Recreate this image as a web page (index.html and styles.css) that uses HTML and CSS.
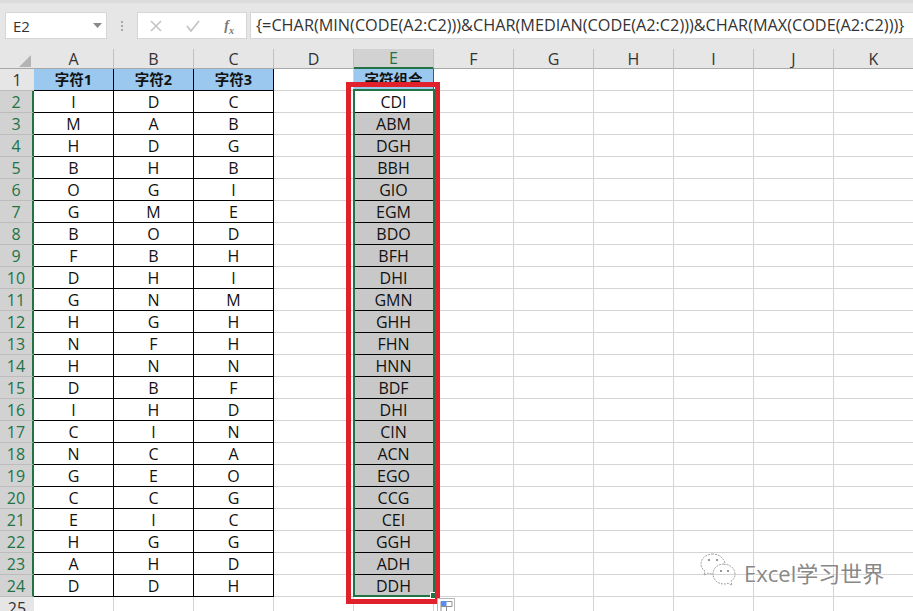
FILE: index.html
```html
<!DOCTYPE html>
<html lang="zh">
<head>
<meta charset="utf-8">
<title>Excel</title>
<link rel="stylesheet" href="styles.css">
</head>
<body>
<div class="app">
  <header class="fbar">
    <div class="namebox"><span>E2</span><svg class="caret" width="9" height="5" viewBox="0 0 9 5"><path d="M0 0h9L4.500 5z" fill="#8a8a8a"/></svg></div>
    <div class="grip"><i></i><i></i><i></i></div>
    <div class="btns">
      <svg width="12" height="12" viewBox="0 0 12 12"><path d="M1 1l10 10M11 1L1 11" stroke="#c4c4c4" stroke-width="1.600" fill="none"/></svg>
      <svg width="14" height="12" viewBox="0 0 14 12"><path d="M1 6l4 5 8-10" stroke="#c4c4c4" stroke-width="1.800" fill="none"/></svg>
      <span class="fx">f<sub>x</sub></span>
    </div>
    <div class="formula">{=CHAR(MIN(CODE(A2:C2)))&amp;CHAR(MEDIAN(CODE(A2:C2)))&amp;CHAR(MAX(CODE(A2:C2)))}</div>
  </header>
  <main class="sheet">
    <table class="grid">
      <thead>
        <tr><th class="corner"><svg width="12" height="12" viewBox="0 0 12 12"><path d="M12 0v12H0z" fill="#b4b4b4"/></svg></th><th>A</th><th>B</th><th>C</th><th>D</th><th class="on">E</th><th>F</th><th>G</th><th>H</th><th>I</th><th>J</th><th>K</th></tr>
      </thead>
      <tbody>
        <tr><th>1</th><td class="k t">字符1</td><td class="k t">字符2</td><td class="k t">字符3</td><td></td><td class="t e1">字符组合</td><td></td><td></td><td></td><td></td><td></td><td></td></tr>
        <tr><th class="on">2</th><td class="k">I</td><td class="k">D</td><td class="k">C</td><td></td><td class="w">CDI</td><td></td><td></td><td></td><td></td><td></td><td></td></tr>
        <tr><th class="on">3</th><td class="k">M</td><td class="k">A</td><td class="k">B</td><td></td><td class="s">ABM</td><td></td><td></td><td></td><td></td><td></td><td></td></tr>
        <tr><th class="on">4</th><td class="k">H</td><td class="k">D</td><td class="k">G</td><td></td><td class="s">DGH</td><td></td><td></td><td></td><td></td><td></td><td></td></tr>
        <tr><th class="on">5</th><td class="k">B</td><td class="k">H</td><td class="k">B</td><td></td><td class="s">BBH</td><td></td><td></td><td></td><td></td><td></td><td></td></tr>
        <tr><th class="on">6</th><td class="k">O</td><td class="k">G</td><td class="k">I</td><td></td><td class="s">GIO</td><td></td><td></td><td></td><td></td><td></td><td></td></tr>
        <tr><th class="on">7</th><td class="k">G</td><td class="k">M</td><td class="k">E</td><td></td><td class="s">EGM</td><td></td><td></td><td></td><td></td><td></td><td></td></tr>
        <tr><th class="on">8</th><td class="k">B</td><td class="k">O</td><td class="k">D</td><td></td><td class="s">BDO</td><td></td><td></td><td></td><td></td><td></td><td></td></tr>
        <tr><th class="on">9</th><td class="k">F</td><td class="k">B</td><td class="k">H</td><td></td><td class="s">BFH</td><td></td><td></td><td></td><td></td><td></td><td></td></tr>
        <tr><th class="on">10</th><td class="k">D</td><td class="k">H</td><td class="k">I</td><td></td><td class="s">DHI</td><td></td><td></td><td></td><td></td><td></td><td></td></tr>
        <tr><th class="on">11</th><td class="k">G</td><td class="k">N</td><td class="k">M</td><td></td><td class="s">GMN</td><td></td><td></td><td></td><td></td><td></td><td></td></tr>
        <tr><th class="on">12</th><td class="k">H</td><td class="k">G</td><td class="k">H</td><td></td><td class="s">GHH</td><td></td><td></td><td></td><td></td><td></td><td></td></tr>
        <tr><th class="on">13</th><td class="k">N</td><td class="k">F</td><td class="k">H</td><td></td><td class="s">FHN</td><td></td><td></td><td></td><td></td><td></td><td></td></tr>
        <tr><th class="on">14</th><td class="k">H</td><td class="k">N</td><td class="k">N</td><td></td><td class="s">HNN</td><td></td><td></td><td></td><td></td><td></td><td></td></tr>
        <tr><th class="on">15</th><td class="k">D</td><td class="k">B</td><td class="k">F</td><td></td><td class="s">BDF</td><td></td><td></td><td></td><td></td><td></td><td></td></tr>
        <tr><th class="on">16</th><td class="k">I</td><td class="k">H</td><td class="k">D</td><td></td><td class="s">DHI</td><td></td><td></td><td></td><td></td><td></td><td></td></tr>
        <tr><th class="on">17</th><td class="k">C</td><td class="k">I</td><td class="k">N</td><td></td><td class="s">CIN</td><td></td><td></td><td></td><td></td><td></td><td></td></tr>
        <tr><th class="on">18</th><td class="k">N</td><td class="k">C</td><td class="k">A</td><td></td><td class="s">ACN</td><td></td><td></td><td></td><td></td><td></td><td></td></tr>
        <tr><th class="on">19</th><td class="k">G</td><td class="k">E</td><td class="k">O</td><td></td><td class="s">EGO</td><td></td><td></td><td></td><td></td><td></td><td></td></tr>
        <tr><th class="on">20</th><td class="k">C</td><td class="k">C</td><td class="k">G</td><td></td><td class="s">CCG</td><td></td><td></td><td></td><td></td><td></td><td></td></tr>
        <tr><th class="on">21</th><td class="k">E</td><td class="k">I</td><td class="k">C</td><td></td><td class="s">CEI</td><td></td><td></td><td></td><td></td><td></td><td></td></tr>
        <tr><th class="on">22</th><td class="k">H</td><td class="k">G</td><td class="k">G</td><td></td><td class="s">GGH</td><td></td><td></td><td></td><td></td><td></td><td></td></tr>
        <tr><th class="on">23</th><td class="k">A</td><td class="k">H</td><td class="k">D</td><td></td><td class="s">ADH</td><td></td><td></td><td></td><td></td><td></td><td></td></tr>
        <tr><th class="on">24</th><td class="k">D</td><td class="k">D</td><td class="k">H</td><td></td><td class="s">DDH</td><td></td><td></td><td></td><td></td><td></td><td></td></tr>
        <tr><th>25</th><td></td><td></td><td></td><td></td><td></td><td></td><td></td><td></td><td></td><td></td><td></td></tr>
      </tbody>
    </table>
    <div class="selection"><div class="handle"></div></div>
    <div class="redbox"></div>
    <svg class="quick" width="18" height="16" viewBox="0 0 18 16"><path d="M.5.5h17v15H.5z" fill="#fff" stroke="#b8b8b8"/><path d="M4 3.500h11v5H4zM4 8.500h5.500v5H4z" fill="#fff" stroke="#8e8e8e"/><path d="M4 3h5.500v5H4z" fill="#5b8df0"/></svg>
    <div class="mark">
      <svg width="36" height="34" viewBox="0 0 36 34"><g fill="none" stroke="#8c8c8c" stroke-width=".8" stroke-dasharray="2 1"><path d="M13 1C6 1 1 5.500 1 11c0 3 2 6 4 7l-1 4 4-2c1 .5 3 1 5 1"/><path d="M25 10C23 4 18 1 13 1M24 11c-6 0-11 4-11 10s5 10 11 10c2 0 3-.3 4-.8l4 2-1-4c3-2 4-4 4-7 0-6-5-10-11-10z"/></g><path d="M8 7h2M16 7h2M20 18h2M27 18h2" stroke="#777" stroke-width="1.300"/></svg>
      <span>Excel学习世界</span>
    </div>
  </main>
</div>
</body>
</html>
```
FILE: styles.css
```css
* { box-sizing: border-box; }
html, body { margin: 0; padding: 0; background: #fff; overflow: hidden; }
.app { width: 913px; height: 611px; overflow: hidden; font-family: "Open Sans", "Noto Sans CJK SC", sans-serif; color: #111; }

.fbar { height: 49px; background: #e6e6e6; border-top: 3px solid #dcdcdc; display: flex; align-items: flex-start; padding: 9px 0 0 5px; }
.namebox { width: 102px; height: 27px; background: #fff; border: 1px solid #d6d6d6; display: flex; align-items: center; justify-content: space-between; padding: 0 4px 0 7px; font-size: 15px; color: #333; }
.grip { width: 30px; height: 27px; display: flex; flex-direction: column; align-items: center; justify-content: center; gap: 2px; padding-right: 1px; }
.grip i { width: 2px; height: 2px; background: #a8a8a8; }
.btns { width: 110px; height: 27px; background: #fff; border: 1px solid #d6d6d6; display: flex; align-items: center; justify-content: space-between; padding: 0 12px 0 12px; }
.fx { font: italic 600 14px "Liberation Serif", serif; color: #777; line-height: 16px; }
.fx sub { font-size: 10px; line-height: 0; }
.formula { flex: 1; height: 27px; margin-left: 3px; background: #fff; border: 1px solid #d6d6d6; border-right: 0; padding-left: 5px; font-size: 16.250px; line-height: 24px; white-space: nowrap; color: #333; }

.sheet { position: relative; height: 562px; overflow: hidden; }
.grid { border-collapse: separate; border-spacing: 0; table-layout: fixed; width: 914px; }
.grid th, .grid td { padding: 0; text-align: center; font-size: 16px; font-weight: 400; line-height: 18px; overflow: hidden; white-space: nowrap; }
.grid th { background: #e6e6e6; color: #333; border-right: 1px solid #bcbcbc; border-bottom: 1px solid #bcbcbc; }
.grid thead th { height: 20px; width: 80px; border-right-color: #c0c0c0; border-bottom-color: #a8a8a8; }
.grid thead th.corner { width: 34px; border-right: 0; text-align: right; padding-right: 3px; }
.corner svg { display: block; margin: 5px 0 0 auto; }
.grid thead th.on { background: #d2d2d2; color: #217346; border-bottom: 2px solid #217346; }
.grid tbody th { border-right: 0; color: #333; }
.grid tbody th.on { background: #d2d2d2; color: #217346; border-right: 2px solid #217346; border-bottom-color: #bcbcbc; }
.grid tbody tr { height: 22px; }
.grid td { height: 22px; border-right: 1px solid #d4d4d4; border-bottom: 1px solid #d4d4d4; }
.grid td.k { border-right-color: #000; border-bottom-color: #000; }
.grid td.t { background: #9bc8ee; font-size: 14.500px; font-weight: 700; color: #111; line-height: 16px; }
.grid td.e1 { border-right-color: #555; border-bottom-color: #555; }
.grid td.w { border-bottom-color: #000; }
.grid td.s { background: #c8c8c8; border-bottom-color: #000; border-right-color: #e4e4e4; box-shadow: inset 1px 0 0 #e4e4e4; }

.selection { position: absolute; left: 353px; top: 40px; width: 82px; height: 508px; border: 2px solid #217346; }
.handle { position: absolute; right: -4px; bottom: -4px; width: 7px; height: 7px; background: #217346; border: 1px solid #fff; }
.redbox { position: absolute; left: 346px; top: 33px; width: 94px; height: 522px; border: 5px solid #e0212b; }
.quick { position: absolute; left: 437px; top: 549px; }
.mark { position: absolute; left: 700px; top: 504px; display: flex; align-items: center; gap: 8px; color: #8a8a8a; }
.mark span { font-size: 22px; line-height: 28px; margin-top: 6px; text-shadow: 1px 1px 0 #fff; color: #888; }
```
